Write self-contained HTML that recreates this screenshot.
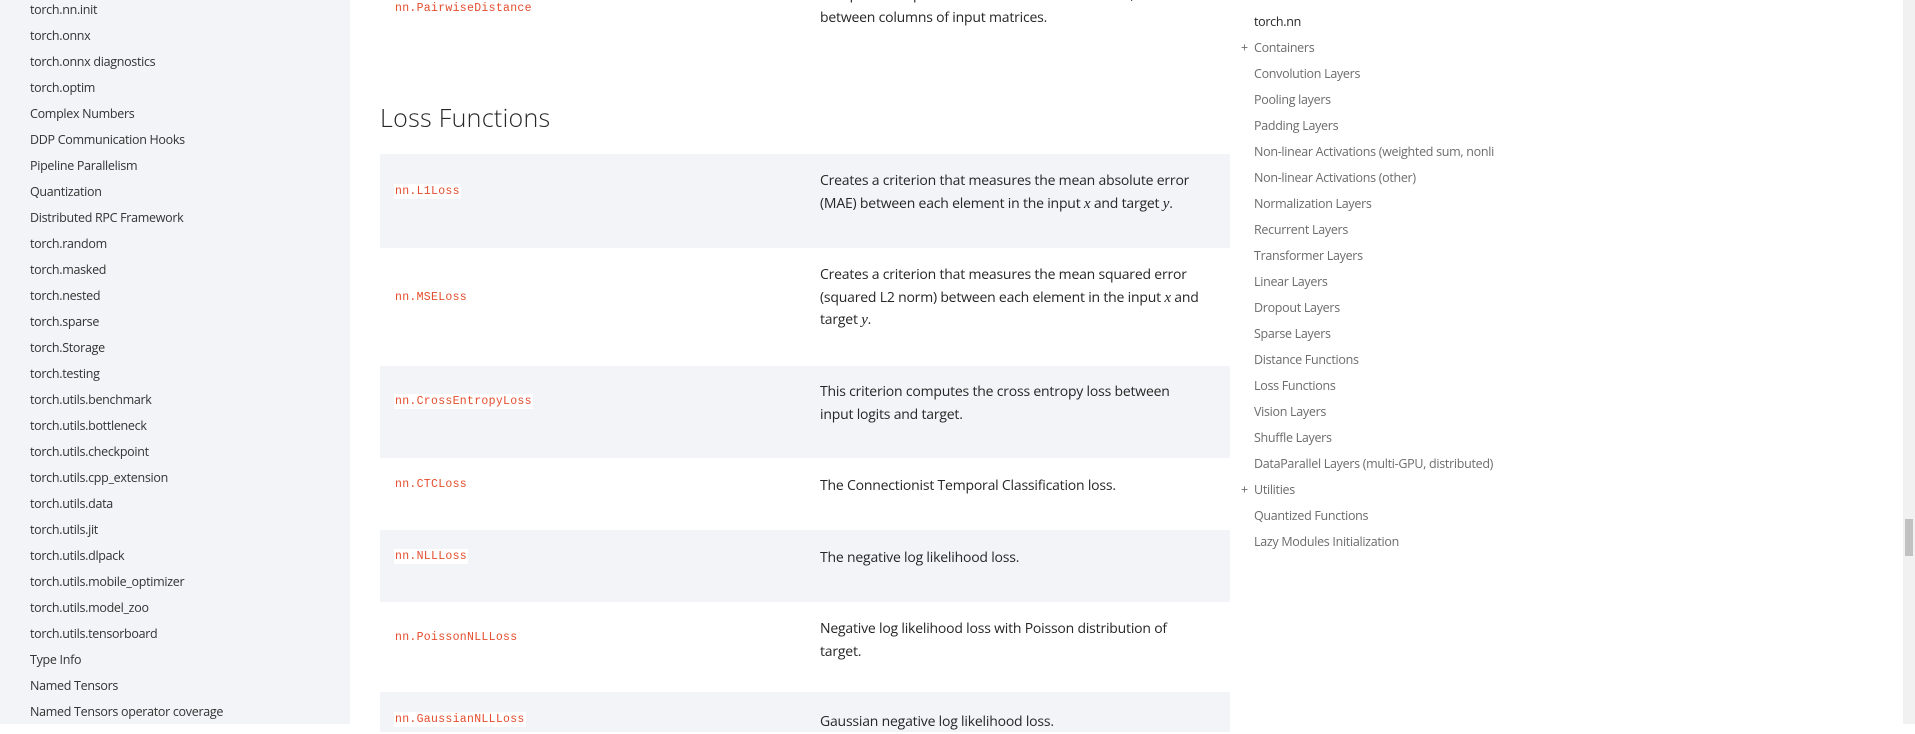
<!DOCTYPE html>
<html><head><meta charset="utf-8"><style>
*{margin:0;padding:0;box-sizing:border-box}
body{width:1915px;height:724px;overflow:hidden;background:#fff;font-family:"Open Sans","Liberation Sans",sans-serif;position:relative}
.side{position:absolute;left:0;top:0;width:350px;height:724px;background:#f3f4f7}
.side div{position:absolute;left:30px;font-size:12.5px;color:#333;line-height:16px;letter-spacing:-0.3px}
.toc div{position:absolute;left:1254px;font-size:12.5px;color:#6c6c6d;line-height:16px;letter-spacing:-0.3px}
.toc .p{left:1241px}
h2{position:absolute;left:380px;top:101px;font-weight:300;font-size:25px;color:#262626;letter-spacing:0.3px}
.row{position:absolute;left:380px;width:850px}
.g{background:#f3f4f7}
code{position:absolute;left:14px;font-family:"Liberation Mono",monospace;font-size:11.5px;color:#e44c2c;background:#fff;padding:1px 1px;letter-spacing:0.3px}
.d{position:absolute;left:440px;width:384px;font-size:14px;line-height:22.5px;color:#262626;letter-spacing:-0.2px}
i{font-family:"Liberation Serif",serif;font-size:15px}
.sb{position:absolute;left:1903px;top:0;width:12px;height:724px;background:#f1f1f1}
.th{position:absolute;left:1905px;top:519px;width:8px;height:37px;background:#c1c1c1}
</style></head><body>
<div class="side">
<div style="top:2px">torch.nn.init</div>
<div style="top:28px">torch.onnx</div>
<div style="top:54px">torch.onnx diagnostics</div>
<div style="top:80px">torch.optim</div>
<div style="top:106px">Complex Numbers</div>
<div style="top:132px">DDP Communication Hooks</div>
<div style="top:158px">Pipeline Parallelism</div>
<div style="top:184px">Quantization</div>
<div style="top:210px">Distributed RPC Framework</div>
<div style="top:236px">torch.random</div>
<div style="top:262px">torch.masked</div>
<div style="top:288px">torch.nested</div>
<div style="top:314px">torch.sparse</div>
<div style="top:340px">torch.Storage</div>
<div style="top:366px">torch.testing</div>
<div style="top:392px">torch.utils.benchmark</div>
<div style="top:418px">torch.utils.bottleneck</div>
<div style="top:444px">torch.utils.checkpoint</div>
<div style="top:470px">torch.utils.cpp_extension</div>
<div style="top:496px">torch.utils.data</div>
<div style="top:522px">torch.utils.jit</div>
<div style="top:548px">torch.utils.dlpack</div>
<div style="top:574px">torch.utils.mobile_optimizer</div>
<div style="top:600px">torch.utils.model_zoo</div>
<div style="top:626px">torch.utils.tensorboard</div>
<div style="top:652px">Type Info</div>
<div style="top:678px">Named Tensors</div>
<div style="top:704px">Named Tensors operator coverage</div>
</div>

<div class="row" style="top:-30px;height:78px"><code style="top:31px">nn.PairwiseDistance</code><div class="d" style="top:14px;width:420px">Computes the pairwise distance between vectors,<br>between columns of input matrices.</div></div>
<h2>Loss Functions</h2>
<div class="row g" style="top:154px;height:94px"><code style="top:30px">nn.L1Loss</code><div class="d" style="top:16px">Creates a criterion that measures the mean absolute error (MAE) between each element in the input <i>x</i> and target <i>y</i>.</div></div>
<div class="row" style="top:248px;height:118px"><code style="top:42px">nn.MSELoss</code><div class="d" style="top:16px">Creates a criterion that measures the mean squared error (squared L2 norm) between each element in the input <i>x</i> and target <i>y</i>.</div></div>
<div class="row g" style="top:366px;height:92px"><code style="top:28px">nn.CrossEntropyLoss</code><div class="d" style="top:15px">This criterion computes the cross entropy loss between input logits and target.</div></div>
<div class="row" style="top:458px;height:72px"><code style="top:19px">nn.CTCLoss</code><div class="d" style="top:17px">The Connectionist Temporal Classification loss.</div></div>
<div class="row g" style="top:530px;height:72px"><code style="top:19px">nn.NLLLoss</code><div class="d" style="top:17px">The negative log likelihood loss.</div></div>
<div class="row" style="top:602px;height:90px"><code style="top:28px">nn.PoissonNLLLoss</code><div class="d" style="top:16px">Negative log likelihood loss with Poisson distribution of target.</div></div>
<div class="row g" style="top:692px;height:40px"><code style="top:20px">nn.GaussianNLLLoss</code><div class="d" style="top:19px">Gaussian negative log likelihood loss.</div></div>

<div class="toc">
<div style="top:14px;color:#262626">torch.nn</div>
<div class="p" style="top:40px">+</div>
<div style="top:40px">Containers</div>
<div style="top:66px">Convolution Layers</div>
<div style="top:92px">Pooling layers</div>
<div style="top:118px">Padding Layers</div>
<div style="top:144px">Non-linear Activations (weighted sum, nonli</div>
<div style="top:170px">Non-linear Activations (other)</div>
<div style="top:196px">Normalization Layers</div>
<div style="top:222px">Recurrent Layers</div>
<div style="top:248px">Transformer Layers</div>
<div style="top:274px">Linear Layers</div>
<div style="top:300px">Dropout Layers</div>
<div style="top:326px">Sparse Layers</div>
<div style="top:352px">Distance Functions</div>
<div style="top:378px">Loss Functions</div>
<div style="top:404px">Vision Layers</div>
<div style="top:430px">Shuffle Layers</div>
<div style="top:456px">DataParallel Layers (multi-GPU, distributed)</div>
<div class="p" style="top:482px">+</div>
<div style="top:482px">Utilities</div>
<div style="top:508px">Quantized Functions</div>
<div style="top:534px">Lazy Modules Initialization</div>
</div>
<div class="sb"></div><div class="th"></div>
</body></html>
